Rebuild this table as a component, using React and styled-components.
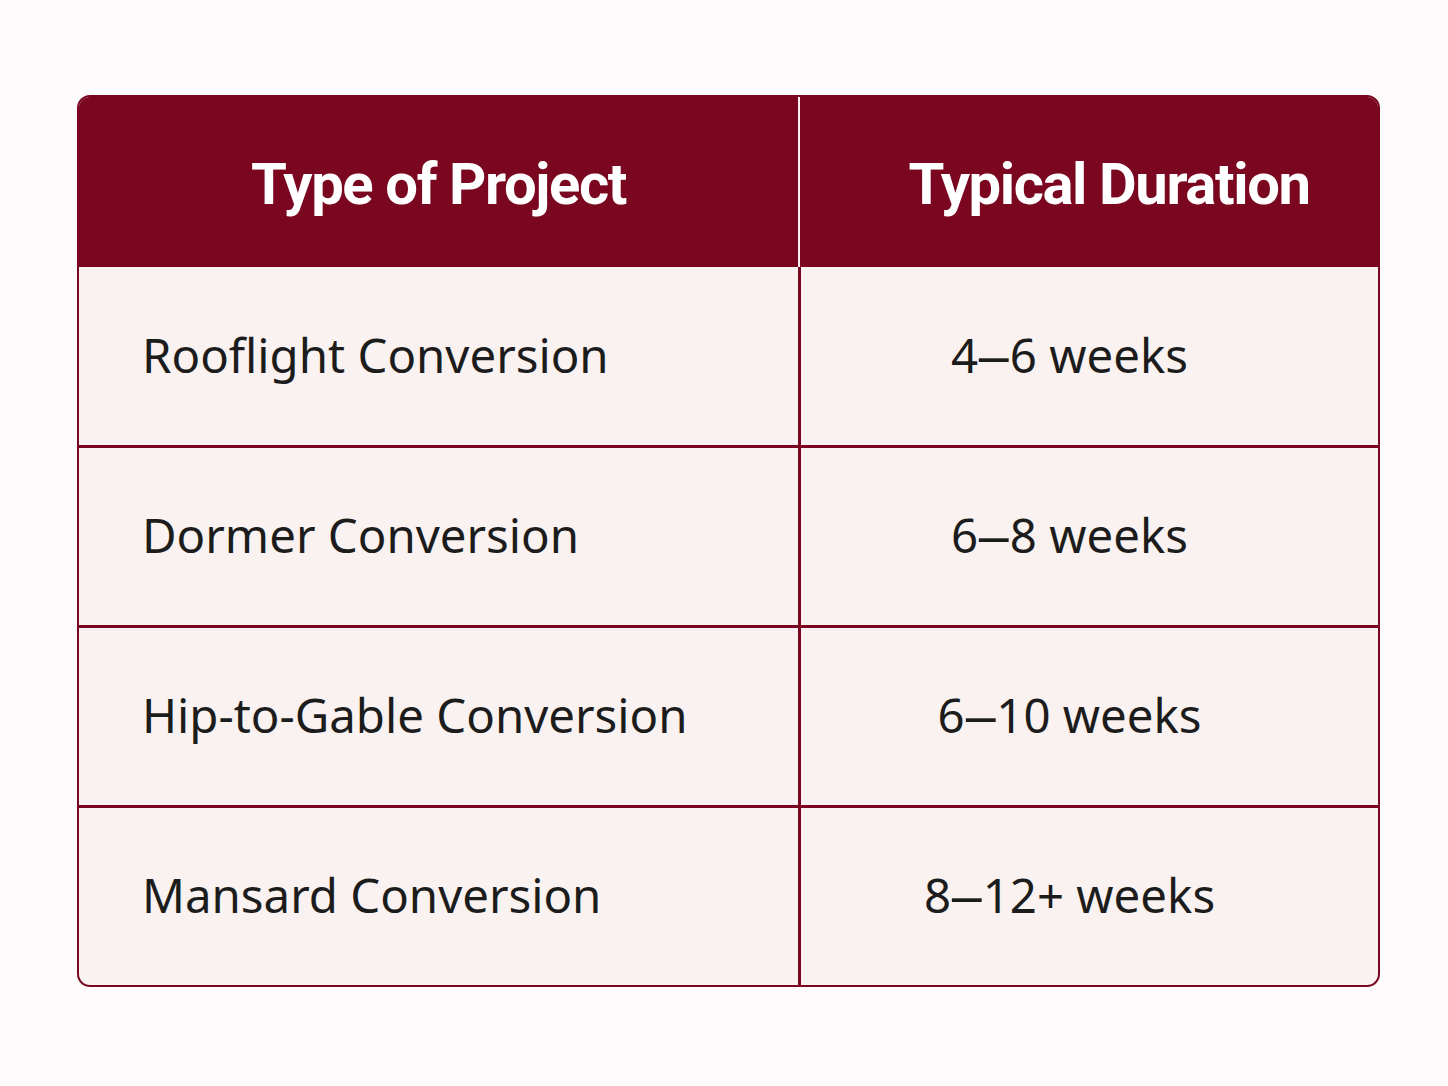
import React from 'react';
import styled, { createGlobalStyle } from 'styled-components';

const GlobalStyle = createGlobalStyle`
  html, body {
    margin: 0;
    padding: 0;
    background: #fdfbfb;
  }
`;

const Page = styled.div`
  width: 1448px;
  height: 1086px;
  padding: 95px 68px 0 77px;
  box-sizing: border-box;
`;

const Table = styled.div`
  display: grid;
  grid-template-columns: 719px 1fr;
  width: 1303px;
  border: 2px solid #7a0620;
  border-radius: 13px;
  overflow: hidden;
  background: #f9f2f0;
  box-sizing: border-box;
`;

const HeadCell = styled.div`
  height: 170px;
  background: #7a0620;
  color: #ffffff;
  display: flex;
  align-items: center;
  justify-content: center;
  font-family: Roboto, 'Liberation Sans', sans-serif;
  font-weight: 700;
  font-size: 58px;
  letter-spacing: -1.4px;
  padding: ${props => props.$right ? '4px 0 0 40px' : '4px 0 0 0'};
  border-left: ${props => props.$right ? '2px solid #fbeff0' : 'none'};
  box-sizing: border-box;
`;

const Cell = styled.div`
  height: ${props => props.$first ? '178px' : '180px'};
  display: flex;
  align-items: center;
  justify-content: ${props => props.$right ? 'center' : 'flex-start'};
  padding: ${props => props.$right ? '0 40px 4px 0' : '0 0 4px 63px'};
  border-top: ${props => props.$first ? 'none' : '3px solid #7a0620'};
  border-left: ${props => props.$right ? '3px solid #7a0620' : 'none'};
  font-family: 'Noto Sans', 'Open Sans', sans-serif;
  font-size: 47.4px;
  color: #1c1c1c;
  box-sizing: border-box;
  white-space: pre;
`;

const Dash = styled.span`
  display: inline-block;
  transform: scaleX(1.5);
  margin: 0 4px;
`;

const rows = [
  ['Rooflight Conversion', '4', '6 weeks'],
  ['Dormer Conversion', '6', '8 weeks'],
  ['Hip-to-Gable Conversion', '6', '10 weeks'],
  ['Mansard Conversion', '8', '12+ weeks'],
];

export default function App() {
  return (
    <>
      <GlobalStyle />
      <Page>
        <Table>
          <HeadCell>Type of Project</HeadCell>
          <HeadCell $right>Typical Duration</HeadCell>
          {rows.map(([type, from, to], i) => (
            <React.Fragment key={type}>
              <Cell $first={i === 0}>{type}</Cell>
              <Cell $first={i === 0} $right>
                {from}<Dash>–</Dash>{to}
              </Cell>
            </React.Fragment>
          ))}
        </Table>
      </Page>
    </>
  );
}
